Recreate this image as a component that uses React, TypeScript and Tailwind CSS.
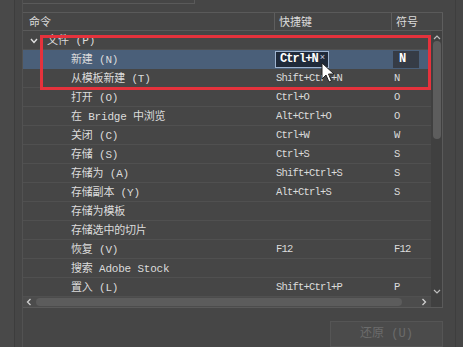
import React from "react";

type Row = { name: string; key?: string; sym?: string; indent?: boolean; group?: boolean; sel?: boolean };

const rows: Row[] = [
  { name: "文件 (P)", group: true },
  { name: "新建 (N)", key: "Ctrl+N", sym: "N", sel: true },
  { name: "从模板新建 (T)", key: "Shift+Ctrl+N", sym: "N" },
  { name: "打开 (O)", key: "Ctrl+O", sym: "O" },
  { name: "在 Bridge 中浏览", key: "Alt+Ctrl+O", sym: "O" },
  { name: "关闭 (C)", key: "Ctrl+W", sym: "W" },
  { name: "存储 (S)", key: "Ctrl+S", sym: "S" },
  { name: "存储为 (A)", key: "Shift+Ctrl+S", sym: "S" },
  { name: "存储副本 (Y)", key: "Alt+Ctrl+S", sym: "S" },
  { name: "存储为模板" },
  { name: "存储选中的切片" },
  { name: "恢复 (V)", key: "F12", sym: "F12" },
  { name: "搜索 Adobe Stock" },
  { name: "置入 (L)", key: "Shift+Ctrl+P", sym: "P" },
];

const font = { fontFamily: '"Liberation Mono", "Noto Sans CJK SC", monospace' };

export default function App() {
  return (
    <div
      className="relative w-[463px] h-[347px] overflow-hidden bg-[#464646] text-[#dcdcdc] flex"
      style={font}
    >
      <div className="w-[15px] h-full bg-[#494949] border-r border-[#3d3d3d]" />
      <div className="w-[8px] h-full border-r border-[#525252]" />
      <div className="flex flex-col w-[420px]">
        <div className="w-[172px] h-[4px] border-b border-r border-[#5a5a5a]" />
        <div className="h-[9px]" />
        {/* header */}
        <div className="flex h-[19px] border-t border-b border-[#5a5a5a] text-[11px] items-center">
          <div className="w-[252px] pl-[6px] pt-[3px] border-r border-[#5e5e5e] h-full flex items-center">命令</div>
          <div className="w-[117px] pl-[4px] pt-[3px] border-r border-[#5e5e5e] h-full flex items-center">快捷键</div>
          <div className="flex-1 pl-[4px] pt-[3px] border-r border-[#5e5e5e] h-full flex items-center">符号</div>
        </div>
        {/* body */}
        <div className="flex h-[277px]">
          <div className="flex flex-col w-[408px]">
            <div className="flex flex-col h-[266px]">
              {rows.map((r, i) => (
                <div
                  key={i}
                  className={
                    "flex h-[19px] items-center border-b text-[10.5px] " +
                    (r.sel ? "bg-[#4a5f79] border-[#4a5f79]" : "border-[#505050]")
                  }
                >
                  <div className="w-[252px] flex items-center pt-[2px]">
                    {r.group ? (
                      <>
                        <svg width="8" height="6" viewBox="0 0 8 6" className="ml-[7px] mr-[9px]">
                          <path d="M1 1 L4 4.5 L7 1" stroke="#e0e0e0" strokeWidth="1.4" fill="none" />
                        </svg>
                        <span className="text-[11px]">文件 (P)</span>
                      </>
                    ) : (
                      <span className="pl-[48px] text-[11px] tracking-[-0.2px]">{r.name}</span>
                    )}
                  </div>
                  <div className="w-[117px] flex items-center">
                    {r.sel ? (
                      <div className="w-[54px] h-[17px] bg-[#1f2a3a] border border-[#9fb4d0] flex items-center pl-[4px] text-white font-bold text-[12px] tracking-[-0.9px]">
                        Ctrl+N<span className="text-[9px] font-normal ml-[2px] text-[#cfd6e0]">×</span>
                      </div>
                    ) : (
                      <span className="pl-[1px] pt-[2px] tracking-[-0.8px]">{r.key}</span>
                    )}
                  </div>
                  <div className="flex-1 flex items-center">
                    {r.sel ? (
                      <div className="ml-[1px] w-[26px] h-[17px] bg-[#363c46] flex items-center pl-[6px] text-white font-bold text-[12px]">
                        N
                      </div>
                    ) : (
                      <span className="pl-[2px] pt-[2px] tracking-[-0.8px]">{r.sym}</span>
                    )}
                  </div>
                </div>
              ))}
            </div>
            <div className="flex-1" />
            {/* horizontal scrollbar */}
            <div className="h-[10px] bg-[#4c4c4c] flex items-center relative">
              <svg width="6" height="8" viewBox="0 0 6 8" className="ml-[3px]">
                <path d="M4.5 1 L1.5 4 L4.5 7" stroke="#cfcfcf" strokeWidth="1.3" fill="none" />
              </svg>
              <div className="ml-[4px] w-[366px] h-[8px] rounded-[4px] bg-[#5c5c5c]" />
              <div className="flex-1" />
              <svg width="6" height="8" viewBox="0 0 6 8" className="mr-[4px]">
                <path d="M1.5 1 L4.5 4 L1.5 7" stroke="#cfcfcf" strokeWidth="1.3" fill="none" />
              </svg>
            </div>
          </div>
          {/* vertical scrollbar */}
          <div className="w-[12px] bg-[#404040] border-r border-[#5a5a5a] flex flex-col items-center pt-[3px]">
            <svg width="8" height="6" viewBox="0 0 8 6">
              <path d="M1 5 L4 2 L7 5" stroke="#bdbdbd" strokeWidth="1.2" fill="none" />
            </svg>
            <div className="mt-[1px] w-[8px] h-[98px] rounded-[4px] bg-[#5d5d5d]" />
            <div className="flex-1" />
            <svg width="8" height="6" viewBox="0 0 8 6" className="mb-[12px]">
              <path d="M1 1 L4 4 L7 1" stroke="#bdbdbd" strokeWidth="1.2" fill="none" />
            </svg>
          </div>
        </div>
        <div className="h-[1px] bg-[#5a5a5a] w-[420px]" />
        <div className="flex justify-end mt-[13px]">
          <div className="w-[113px] h-[26px] bg-[#4b4b4b] border border-[#555] flex items-center justify-center text-[#6c6c6c] text-[12px]">
            还原 (U)
          </div>
        </div>
      </div>
      <div className="flex-1 flex">
        <div className="w-[12px]" />
        <div className="w-[1px] h-full bg-[#3e3e3e]" />
      </div>

      {/* red annotation box */}
      <div className="absolute left-[40px] top-[35px] w-[391px] h-[55px] border-[3px] border-[#e5323c]" />
      {/* mouse cursor */}
      <svg className="absolute left-[321px] top-[62px]" width="14" height="22" viewBox="0 0 14 22">
        <path d="M1 1 L1 17 L5 13 L8 20 L10.5 19 L7.5 12 L13 12 Z" fill="#ffffff" stroke="#222" strokeWidth="1" />
      </svg>
    </div>
  );
}
